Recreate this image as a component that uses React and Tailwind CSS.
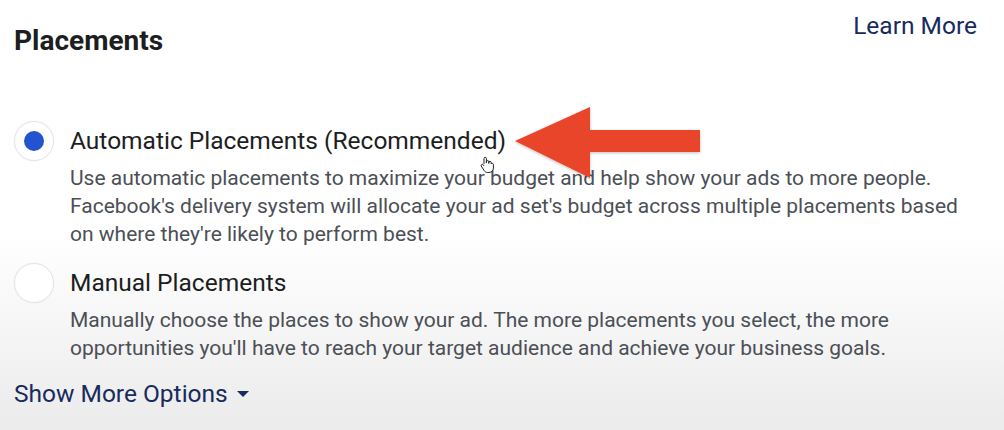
import React from 'react';

const options = [
  {
    id: 'automatic',
    title: 'Automatic Placements (Recommended)',
    lines: [
      'Use automatic placements to maximize your budget and help show your ads to more people.',
      "Facebook's delivery system will allocate your ad set's budget across multiple placements based",
      "on where they're likely to perform best.",
    ],
    checked: true,
  },
  {
    id: 'manual',
    title: 'Manual Placements',
    lines: [
      'Manually choose the places to show your ad. The more placements you select, the more',
      "opportunities you'll have to reach your target audience and achieve your business goals.",
    ],
    checked: false,
  },
];

const Radio = ({ checked }) => (
  <span className="flex h-[40px] w-[40px] shrink-0 items-center justify-center rounded-full border border-[#e4e5e8] bg-white shadow-[0_0_2px_rgba(0,0,0,0.06)]">
    {checked && <span className="h-[20px] w-[20px] rounded-full bg-[#2453d0]" />}
  </span>
);

const PlacementOption = ({ option, className }) => (
  <div className={`flex items-start gap-[16px] ${className}`}>
    <Radio checked={option.checked} />
    <div className="flex flex-col">
      <span className="text-[24.5px] leading-[40px] text-[#1c1e21]">{option.title}</span>
      <p className="mt-[3px] text-[21px] leading-[28px] text-[#4b4f56]">
        {option.lines.map((line) => (
          <span key={line} className="block whitespace-nowrap">
            {line}
          </span>
        ))}
      </p>
    </div>
  </div>
);

const Arrow = () => (
  <svg
    className="pointer-events-none absolute left-[510px] top-[100px]"
    width="200"
    height="84"
    viewBox="0 0 200 84"
  >
    <defs>
      <filter id="arrow-shadow" x="-10%" y="-20%" width="120%" height="140%">
        <feDropShadow dx="0" dy="1" stdDeviation="1.5" floodColor="#000" floodOpacity="0.25" />
      </filter>
    </defs>
    <path
      d="M5 41 L80 7 L80 30 L190 30 L190 52 L80 52 L80 78 Z"
      fill="#e8452c"
      filter="url(#arrow-shadow)"
    />
  </svg>
);

const HandCursor = () => (
  <svg
    className="pointer-events-none absolute left-[479px] top-[156px]"
    width="16"
    height="18"
    viewBox="0 0 16 18"
  >
    <path
      d="M5 8 V2.5 a1.2 1.2 0 0 1 2.4 0 V7 M7.4 7 V5.8 a1.2 1.2 0 0 1 2.4 0 V7.5 M9.8 7.5 V6.6 a1.2 1.2 0 0 1 2.4 0 V8 a1.2 1.2 0 0 1 2.2 0.2 V12 c0 2.5 -1.8 4.5 -4.5 4.5 H8.5 c-1.6 0 -2.6 -0.8 -3.4 -2 L2.2 10 a1.2 1.2 0 0 1 2 -1.3 L5 10"
      fill="#fff"
      stroke="#222"
      strokeWidth="1"
      strokeLinejoin="round"
    />
  </svg>
);

export default function App() {
  return (
    <div
      className="relative h-[430px] w-[1004px] overflow-hidden bg-gradient-to-b from-white from-55% to-[#ebebeb]"
      style={{ fontFamily: 'Roboto, "Liberation Sans", sans-serif' }}
    >
      <div className="flex items-start justify-between pl-[14px] pr-[27px]">
        <h2 className="mt-[23px] text-[28px] font-bold leading-[36px] text-[#1c1e21]">Placements</h2>
        <a className="mt-[10px] text-[24.5px] leading-[32px] text-[#182b5c]">Learn More</a>
      </div>

      <div className="mt-[62px] flex flex-col pl-[14px]">
        <PlacementOption option={options[0]} />
        <PlacementOption option={options[1]} className="mt-[15px]" />
        <button className="mt-[16px] flex items-center gap-[9px] self-start text-[24.5px] leading-[32px] text-[#182b5c]">
          Show More Options
          <svg width="12" height="6" viewBox="0 0 12 6">
            <path d="M0 0 H12 L6 6 Z" fill="#182b5c" />
          </svg>
        </button>
      </div>

      <Arrow />
      <HandCursor />
    </div>
  );
}
